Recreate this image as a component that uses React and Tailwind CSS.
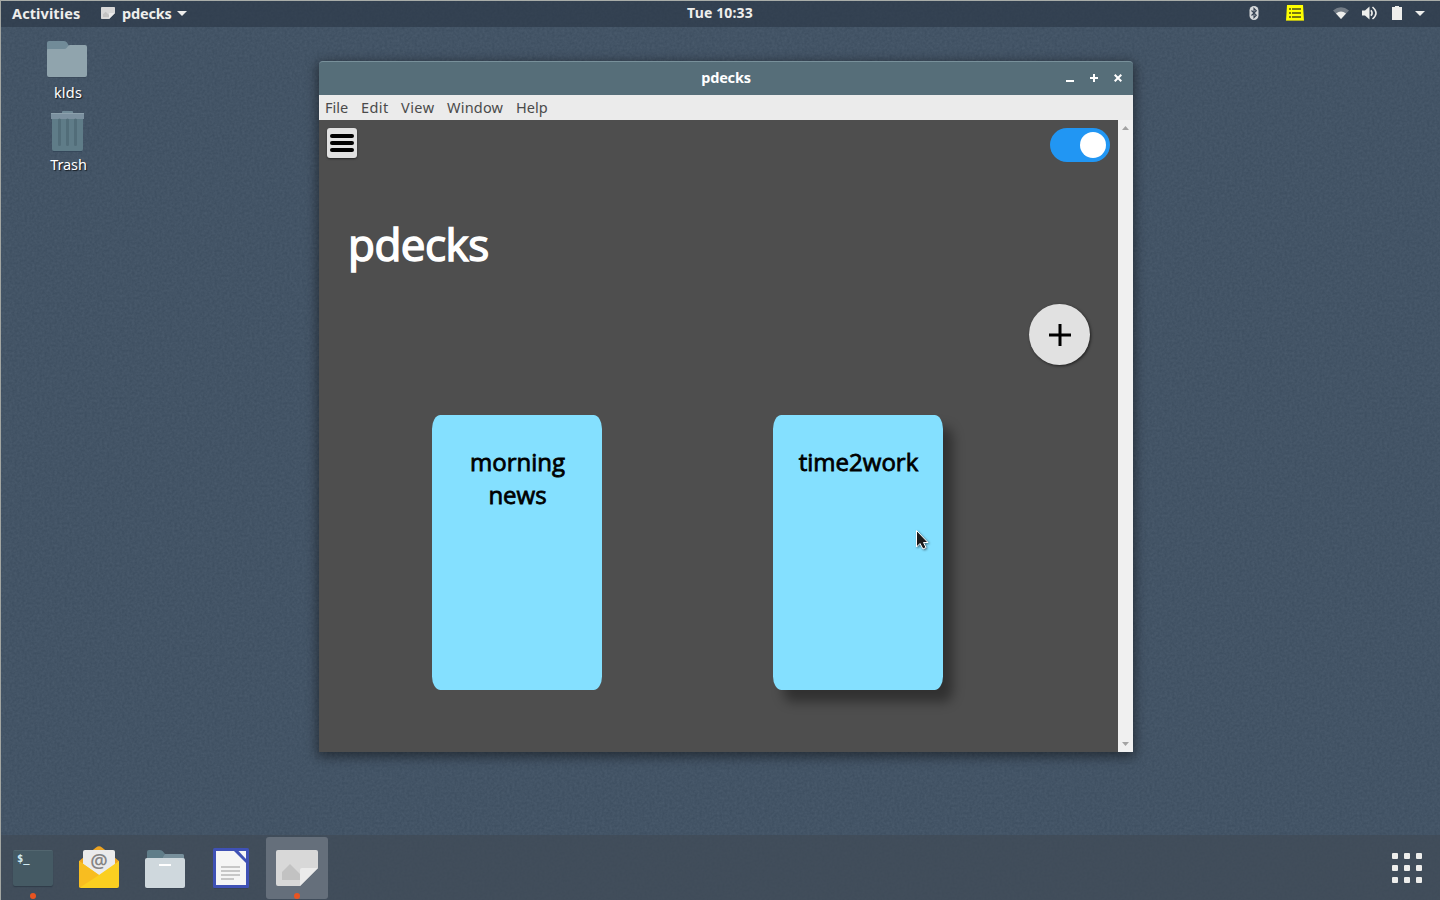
import React from "react";

const TEXT_SHADOW = "[text-shadow:1px_1px_1px_rgba(0,0,0,0.7)]";

function Grain() {
  return (
    <svg className="pointer-events-none absolute inset-0 h-full w-full opacity-[0.06]" aria-hidden="true">
      <filter id="grain" colorInterpolationFilters="sRGB">
        <feTurbulence type="fractalNoise" baseFrequency="0.4" numOctaves="2" seed="4" />
        <feColorMatrix values="1 0 0 0 -0.2  1 0 0 0 -0.14  1 0 0 0 -0.08  0 0 0 0 1" />
      </filter>
      <rect width="100%" height="100%" filter="url(#grain)" />
    </svg>
  );
}

function NoteIcon({ className }) {
  return (
    <svg viewBox="0 0 42 36" className={className}>
      <path d="M2 0H40Q42 0 42 2V18L24 36H2Q0 36 0 34V2Q0 0 2 0Z" fill="#d8d8d8" />
      <path d="M6 30V22L14 14L24 24V30Z" fill="#c2c2c2" />
      <path d="M42 18H26Q24 18 24 20V36Z" fill="#ebebeb" />
    </svg>
  );
}

function TopBar() {
  return (
    <header className="relative flex h-[27px] shrink-0 items-center border-t border-[#a9ada9] bg-[#2b3747]/65 pb-[2px] text-[14.5px] font-bold leading-none text-[#eeeeec]">
      <div className="flex flex-1 items-center pl-3">
        <span className="w-[69px] whitespace-nowrap tracking-[0.1px]">Activities</span>
        <NoteIcon className="ml-5 h-3 w-[14px]" />
        <span className="ml-[7px] w-[50px] whitespace-nowrap tracking-[-0.2px]">pdecks</span>
        <svg viewBox="0 0 10 5" className="ml-[5px] h-[5px] w-[10px]"><path d="M0 0H10L5 5Z" fill="#eeeeec" /></svg>
      </div>
      <span className="whitespace-nowrap text-[14px] tracking-[0.15px]">Tue 10:33</span>
      <div className="flex flex-1 items-center justify-end pr-3">
        <svg viewBox="0 0 10 14" className="h-[14px] w-[10px]">
          <rect x=".5" width="9" height="14" rx="4.5" fill="#d5d8da" />
          <path d="M2.5 4.5L7.3 9.2L5 11.6V2.4L7.3 4.8L2.5 9.5" fill="none" stroke="#344152" strokeWidth="1.1" />
        </svg>
        <svg viewBox="0 0 18 16" className="ml-[27.5px] h-4 w-[18px]">
          <path d="M1 0H17L18 16H0Z" fill="#ffff00" />
          <path d="M3 4H5M6 4H15M3 8H5M6 8H15M3 12H5M6 12H15" stroke="#4d4d18" strokeWidth="1.4" />
          <path d="M0 15.5H18" stroke="#b5b51a" />
        </svg>
        <svg viewBox="0 0 16 12" className="ml-[29px] h-3 w-4">
          <path d="M0 3.5Q8 -3.2 16 3.5L8 12Z" fill="#727b85" />
          <path d="M3 6.6Q8 2.5 13 6.6L8 12Z" fill="#eeeeec" />
        </svg>
        <svg viewBox="0 0 16 14" className="ml-[13px] h-[14px] w-4">
          <path d="M0 4.5H3L7.5 .5V13.5L3 9.5H0Z" fill="#eeeeec" />
          <path d="M9 4.2Q11.2 7 9 9.8" fill="none" stroke="#eeeeec" strokeWidth="1.6" />
          <path d="M10.5 1Q17.5 7 10.5 13" fill="none" stroke="#eeeeec" strokeWidth="1.6" />
        </svg>
        <svg viewBox="0 0 10 14" className="ml-[14px] h-[14px] w-[10px]"><path d="M3 0H7V1H10V14H0V1H3Z" fill="#eeeeec" /></svg>
        <svg viewBox="0 0 10 5" className="ml-[13px] mr-[3px] h-[5px] w-[10px]"><path d="M0 0H10L5 5Z" fill="#eeeeec" /></svg>
      </div>
    </header>
  );
}

function DesktopIcons() {
  return (
    <div className={"relative flex w-[135px] shrink-0 flex-col items-center text-[14.5px] leading-5 text-white " + TEXT_SHADOW}>
      <svg viewBox="0 0 40 37" className="mr-[1px] mt-[14px] h-[37px] w-10">
        <path d="M0 34V2Q0 0 2 0H17Q19 0 20 1.5L22 5V12H0Z" fill="#718b98" />
        <path d="M0 9Q0 8 1 8H17Q19 8 20 6.5L21.5 4.5Q22 4 23 4H38Q40 4 40 6V34Q40 36 38 36H2Q0 36 0 34Z" fill="#90a4ad" />
        <path d="M1 36.5H39" stroke="#344152" strokeOpacity=".5" />
      </svg>
      <span className="ml-[1px] mt-[4px] tracking-[0.2px]">klds</span>
      <svg viewBox="0 0 33 41" className="mt-[9px] h-[41px] w-[33px]">
        <path d="M11 2V1Q11 0 12 0H21Q22 0 22 1V2Z" fill="#718b98" />
        <path d="M1 7H32V38Q32 40 30 40H3Q1 40 1 38Z" fill="#5f7c88" />
        <path d="M0 3Q0 2 1 2H32Q33 2 33 3V8H0Z" fill="#7b909f" />
        <path d="M0 2.5H33" stroke="#8ca0ac" />
        <path d="M8.5 9V33.5M16.5 9V33.5M24.5 9V33.5" stroke="#526d79" strokeWidth="3" strokeLinecap="round" />
        <path d="M2 40.5H31" stroke="#35475a" />
      </svg>
      <span className="ml-[2px] mt-[2px] tracking-[-0.1px]">Trash</span>
    </div>
  );
}

function TitleBar() {
  return (
    <div className="flex h-[34px] shrink-0 items-center rounded-t-[4px] border-t border-[#78909a] bg-[#566e79] pb-[1px] text-[14.5px] font-bold leading-[20px] text-white">
      <div className="flex-1 pl-[11px]" />
      <span className="-mt-[3px] tracking-[-0.2px]">pdecks</span>
      <div className="flex flex-1 items-center justify-end gap-4 pr-[11px]">
        <svg viewBox="0 0 8 8" className="h-2 w-2"><path d="M0 7H8" stroke="#fff" strokeWidth="2" /></svg>
        <svg viewBox="0 0 8 8" className="h-2 w-2"><path d="M0 4H8M4 0V8" stroke="#fff" strokeWidth="2" /></svg>
        <svg viewBox="0 0 8 8" className="h-2 w-2"><path d="M.7 .7L7.3 7.3M7.3 .7L.7 7.3" stroke="#fff" strokeWidth="2" /></svg>
      </div>
    </div>
  );
}

function MenuBar() {
  return (
    <nav className="flex h-[25px] shrink-0 items-center bg-[#ebebeb] pl-[6px] text-[14.5px] leading-none text-[#4a4a4a]">
      <span className="w-9">File</span>
      <span className="w-10 tracking-[0.4px]">Edit</span>
      <span className="w-[46px] tracking-[0.45px]">View</span>
      <span className="w-[69px] tracking-[0.2px]">Window</span>
      <span>Help</span>
    </nav>
  );
}

function Card({ title, raised }) {
  return (
    <article
      className={
        "h-[275px] w-[170px] rounded-[5%] bg-[#84e0ff] pl-[21px] pr-5 pt-[30px] text-center text-[24px] leading-[33px] text-black [-webkit-text-stroke:0.8px_black] " +
        (raised ? "shadow-[10px_12px_12px_rgba(0,0,0,0.38)]" : "")
      }
    >
      {title}
    </article>
  );
}

function Cursor() {
  return (
    <svg viewBox="0 0 15 22" className="absolute left-[596px] top-[468px] h-[22px] w-[15px] drop-shadow-[1px_1px_1px_rgba(0,0,0,0.5)]">
      <path d="M1.5 1.500V18L5 14.5L8 20L11 18.5L8.5 13.5H13Z" fill="#1b1b1b" stroke="#fff" strokeWidth="1" />
    </svg>
  );
}

function AppWindow() {
  return (
    <section className="absolute left-[319px] top-[61px] flex h-[691px] w-[814px] flex-col rounded-t-[4px] shadow-[0_3px_12px_2px_rgba(0,0,0,0.45)]">
      <TitleBar />
      <MenuBar />
      <div className="flex min-h-0 flex-1">
        <main className="flex flex-1 flex-col bg-[#4e4e4e] font-['Open_Sans',sans-serif]">
          <div className="flex items-start justify-between p-2">
            <button className="flex h-[30px] w-[30px] flex-col items-center justify-center gap-[3px] rounded-[3px] bg-[#e1e1e1] shadow-[0_1px_2px_rgba(0,0,0,0.5)]">
              <span className="h-1 w-6 rounded-full bg-black" />
              <span className="h-1 w-6 rounded-full bg-black" />
              <span className="h-1 w-6 rounded-full bg-black" />
            </button>
            <div className="flex h-[34px] w-[60px] items-center justify-end rounded-full bg-[#2196f3] pr-1">
              <span className="h-[26px] w-[26px] rounded-full bg-white" />
            </div>
          </div>
          <h1 className="mt-[42px] pl-[29px] text-[44px] leading-[64px] tracking-[-0.5px] text-white [-webkit-text-stroke:1.5px_white]">pdecks</h1>
          <div className="mt-[28px] flex justify-end pr-7">
            <button className="flex h-[61px] w-[61px] items-center justify-center rounded-full bg-[#e1e1e1] shadow-[1px_1px_3px_rgba(0,0,0,0.6)]">
              <svg viewBox="0 0 22 22" className="h-[22px] w-[22px]"><path d="M0 11H22M11 0V22" stroke="#000" strokeWidth="3" /></svg>
            </button>
          </div>
          <div className="mt-[50px] flex gap-[171px] pl-[113px]">
            <Card title="morning news" />
            <Card title="time2work" raised />
          </div>
        </main>
        <div className="flex w-[15px] flex-col items-center justify-between bg-[#f0f0f0] py-[6px]">
          <svg viewBox="0 0 7 4" className="h-1 w-[7px]"><path d="M0 4H7L3.5 0Z" fill="#a3a3a3" /></svg>
          <svg viewBox="0 0 7 4" className="h-1 w-[7px]"><path d="M0 0H7L3.5 4Z" fill="#a3a3a3" /></svg>
        </div>
      </div>
      <Cursor />
    </section>
  );
}

function Dock() {
  return (
    <footer className="relative flex h-[65px] shrink-0 items-start bg-[#404b57]/75 pt-px">
      <div className="flex h-full w-[66px] flex-col items-center">
        <div className="mt-[14px] h-[36px] w-10 rounded-[2px] border-t border-[#52666f] bg-[#455a64] pl-1 pt-[2px] font-['DejaVu_Sans_Mono',monospace] text-[10.5px] font-bold leading-[10px] text-[#d2ecf2] shadow-[0_1px_1px_#303c49]">$_</div>
        <span className="mt-[7px] h-[6px] w-[6px] rounded-full bg-[#e95420]" />
      </div>
      <div className="flex w-[66px] justify-center">
        <svg viewBox="0 0 40 43" className="mt-[10px] h-[43px] w-10">
          <path d="M0 15L17 1.5Q20 -1 23 1.5L40 15V30H0Z" fill="#eda421" />
          <path d="M4 6Q4 4 6 4H34Q36 4 36 6V32H4Z" fill="#ebebeb" />
          <text x="20" y="22" textAnchor="middle" fontFamily="Open Sans, sans-serif" fontSize="19.5" fontWeight="600" fill="#858585">@</text>
          <path d="M0 15L20 29L40 15V40Q40 42 38 42H2Q0 42 0 40Z" fill="#fbcf20" />
          <path d="M0 15L20 29L1 41.5Q0 41 0 40Z" fill="#f8bd20" />
          <path d="M1 42.5H39" stroke="#343f4c" strokeOpacity=".6" />
        </svg>
      </div>
      <div className="flex w-[66px] justify-center">
        <svg viewBox="0 0 40 39" className="mt-[14px] h-[39px] w-10">
          <path d="M2 2Q2 0 4 0H15Q17 0 18 1.5L20 4H37Q39 4 39 6V12H2Z" fill="#607d89" />
          <path d="M18 7L20 4H37Q39 4 39 6V9H18Z" fill="#78909c" />
          <path d="M0 10Q0 8 2 8H38Q40 8 40 10V36Q40 38 38 38H2Q0 38 0 36Z" fill="#cfd8dd" />
          <path d="M14 15H26" stroke="#fff" strokeWidth="2" />
          <path d="M1 38.5H39" stroke="#343f4c" strokeOpacity=".6" />
        </svg>
      </div>
      <div className="flex w-[66px] justify-center">
        <svg viewBox="0 0 36 41" className="mt-[12px] h-[41px] w-9">
          <rect width="36" height="40" rx="1.5" fill="#3f51b5" />
          <path d="M3 3H21L33 15V37H3Z" fill="#f5f5f5" />
          <path d="M25.5 3H33V11Z" fill="#f5f5f5" />
          <path d="M8 19H27M8 23H27M8 27H27M8 31H21" stroke="#c7c7c7" strokeWidth="2" />
          <path d="M1 40.5H35" stroke="#343f4c" strokeOpacity=".6" />
        </svg>
      </div>
      <div className="ml-[2px] mt-[1px] flex h-[62px] w-[62px] flex-col items-center rounded-[3px] bg-[#656f7b]">
        <NoteIcon className="mt-[13px] h-9 w-[42px]" />
        <span className="mt-[7px] h-[6px] w-[6px] rounded-full bg-[#e95420]" />
      </div>
      <div className="ml-auto mr-[18px] mt-[17px] grid grid-cols-3 gap-[6px]">
        {Array.from({ length: 9 }, (_, i) => (
          <span key={i} className="h-[6px] w-[6px] rounded-[1px] bg-[#eeeeec]" />
        ))}
      </div>
    </footer>
  );
}

export default function App() {
  return (
    <div className="relative flex h-[900px] w-[1440px] flex-col overflow-hidden bg-[#435466] font-['Noto_Sans',sans-serif]">
      <Grain />
      <TopBar />
      <div className="flex flex-1">
        <DesktopIcons />
      </div>
      <Dock />
      <AppWindow />
      <div className="absolute inset-y-0 left-0 w-px bg-[#a3a6a2]" />
    </div>
  );
}
